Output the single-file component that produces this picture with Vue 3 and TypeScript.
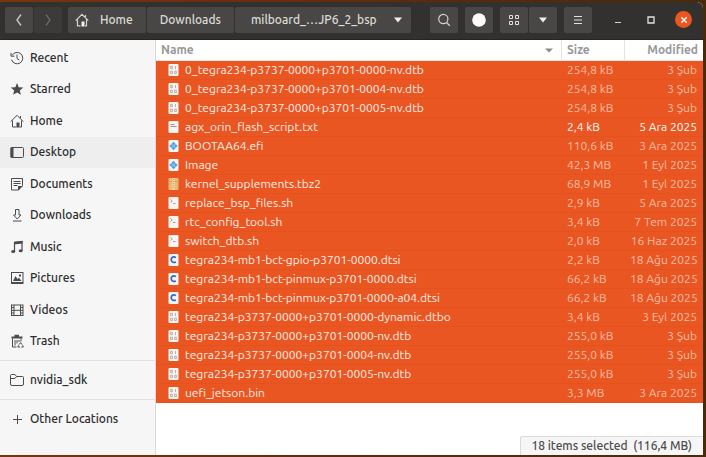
<script setup lang="ts">
import { ref } from 'vue'

type Kind = 'binary' | 'text' | 'exec' | 'archive' | 'script' | 'c'

interface FileRow {
  kind: Kind
  name: string
  size: string
  modified: string
  focused?: boolean
}

interface Place {
  icon: string
  label: string
}

const places: Place[] = [
  { icon: 'recent', label: 'Recent' },
  { icon: 'star', label: 'Starred' },
  { icon: 'home', label: 'Home' },
  { icon: 'desktop', label: 'Desktop' },
  { icon: 'documents', label: 'Documents' },
  { icon: 'downloads', label: 'Downloads' },
  { icon: 'music', label: 'Music' },
  { icon: 'pictures', label: 'Pictures' },
  { icon: 'videos', label: 'Videos' },
  { icon: 'trash', label: 'Trash' },
]
const current = ref('Desktop')

const files: FileRow[] = [
  { kind: 'binary', name: '0_tegra234-p3737-0000+p3701-0000-nv.dtb', size: '254,8 kB', modified: '3 Şub' },
  { kind: 'binary', name: '0_tegra234-p3737-0000+p3701-0004-nv.dtb', size: '254,8 kB', modified: '3 Şub' },
  { kind: 'binary', name: '0_tegra234-p3737-0000+p3701-0005-nv.dtb', size: '254,8 kB', modified: '3 Şub' },
  { kind: 'text', name: 'agx_orin_flash_script.txt', size: '2,4 kB', modified: '5 Ara 2025', focused: true },
  { kind: 'exec', name: 'BOOTAA64.efi', size: '110,6 kB', modified: '3 Ara 2025' },
  { kind: 'exec', name: 'Image', size: '42,3 MB', modified: '1 Eyl 2025' },
  { kind: 'archive', name: 'kernel_supplements.tbz2', size: '68,9 MB', modified: '1 Eyl 2025' },
  { kind: 'script', name: 'replace_bsp_files.sh', size: '2,9 kB', modified: '5 Ara 2025' },
  { kind: 'script', name: 'rtc_config_tool.sh', size: '3,4 kB', modified: '7 Tem 2025' },
  { kind: 'script', name: 'switch_dtb.sh', size: '2,0 kB', modified: '16 Haz 2025' },
  { kind: 'c', name: 'tegra234-mb1-bct-gpio-p3701-0000.dtsi', size: '2,2 kB', modified: '18 Ağu 2025' },
  { kind: 'c', name: 'tegra234-mb1-bct-pinmux-p3701-0000.dtsi', size: '66,2 kB', modified: '18 Ağu 2025' },
  { kind: 'c', name: 'tegra234-mb1-bct-pinmux-p3701-0000-a04.dtsi', size: '66,2 kB', modified: '18 Ağu 2025' },
  { kind: 'binary', name: 'tegra234-p3737-0000+p3701-0000-dynamic.dtbo', size: '3,4 kB', modified: '3 Eyl 2025' },
  { kind: 'binary', name: 'tegra234-p3737-0000+p3701-0000-nv.dtb', size: '255,0 kB', modified: '3 Şub' },
  { kind: 'binary', name: 'tegra234-p3737-0000+p3701-0004-nv.dtb', size: '255,0 kB', modified: '3 Şub' },
  { kind: 'binary', name: 'tegra234-p3737-0000+p3701-0005-nv.dtb', size: '255,0 kB', modified: '3 Şub' },
  { kind: 'binary', name: 'uefi_jetson.bin', size: '3,3 MB', modified: '3 Ara 2025' },
]
</script>

<template>
  <div class="backdrop">
    <div class="window">
      <header class="bar">
        <div class="group history">
          <button class="btn square" aria-label="Back">
            <svg width="14" height="14" viewBox="0 0 14 14"><path d="M9 1.5Q6.800 4.500 5 7Q6.800 9.500 9 12.500" fill="none" stroke="#c9c7c3" stroke-width="1.300" /></svg>
          </button>
          <button class="btn square off" aria-label="Forward" disabled>
            <svg width="14" height="14" viewBox="0 0 14 14"><path d="M5 1.500Q7.200 4.500 9 7Q7.200 9.500 5 12.500" fill="none" stroke="#77746f" stroke-width="1.200" /></svg>
          </button>
        </div>
        <nav class="group path" aria-label="Path">
          <button class="btn crumb first">
            <svg width="14" height="14" viewBox="0 0 14 14">
              <path d="M.7 7.600 7 1.300l6.300 6.300M2.500 6.500v6.300h3M11.500 6.500v6.300h-1.500M10.500 4V2" fill="none" stroke="#d5d3cf" stroke-width="1.200" />
              <path d="M6.500 8.500h3v4.900h-3z" fill="#f2f1ef" />
            </svg>
            Home
          </button>
          <button class="btn crumb">Downloads</button>
          <button class="btn crumb last">
            milboard_…JP6_2_bsp
            <svg width="10" height="6" viewBox="0 0 10 6"><path d="M1 .5h8L5 5.500z" fill="#f0efed" /></svg>
          </button>
        </nav>
        <div class="tools">
          <button class="btn square" aria-label="Search">
            <svg width="14" height="14" viewBox="0 0 14 14"><circle cx="6.300" cy="6" r="4.600" fill="none" stroke="#d5d3cf" stroke-width="1.200" /><path d="m9.500 9.500 3.300 3.200" stroke="#d5d3cf" stroke-width="1.300" /></svg>
          </button>
          <button class="btn square" aria-label="Operations">
            <svg width="14" height="14" viewBox="0 0 14 14"><circle cx="7" cy="7" r="6.800" fill="#fbfbfa" /></svg>
          </button>
          <div class="group">
            <button class="btn square" aria-label="Icon view">
              <svg width="12" height="12" viewBox="0 0 12 12"><path d="M1.500 1.500h3v3h-3zM7.500 1.500h3v3h-3zM1.500 7.500h3v3h-3zM7.500 7.500h3v3h-3z" fill="none" stroke="#e3e1de" /></svg>
            </button>
            <button class="btn square" aria-label="View options">
              <svg width="10" height="6" viewBox="0 0 10 6"><path d="M1 .5h8L5 5.500z" fill="#f0efed" /></svg>
            </button>
          </div>
          <button class="btn square" aria-label="Menu">
            <svg width="10" height="10" viewBox="0 0 10 10"><path d="M1 1.500h8M1 5h8M1 8.500h8" stroke="#e3e1de" stroke-width="1.100" /></svg>
          </button>
        </div>
        <div class="controls">
          <button class="ctl" aria-label="Minimize">
            <svg width="8" height="8" viewBox="0 0 8 8"><path d="M1 6.500h6" stroke="#d5d3cf" stroke-width="1.200" /></svg>
          </button>
          <button class="ctl" aria-label="Maximize">
            <svg width="8" height="8" viewBox="0 0 8 8"><path d="M1 1h6v6H1z" fill="none" stroke="#e3e1de" stroke-width="1.300" /></svg>
          </button>
          <button class="ctl close" aria-label="Close">
            <svg width="8" height="8" viewBox="0 0 8 8"><path d="m1.300 1.300 5.400 5.400M6.700 1.300 1.300 6.700" stroke="#fff" stroke-width="1.400" /></svg>
          </button>
        </div>
      </header>

      <div class="body">
        <nav class="side" aria-label="Places">
          <div class="places">
            <a
              v-for="p in places"
              :key="p.label"
              href="#"
              class="place"
              :class="{ on: p.label === current }"
              @click.prevent="current = p.label"
            >
              <svg width="14" height="14" viewBox="0 0 14 14" fill="none" stroke="#4b4b4b" stroke-width="1">
                <template v-if="p.icon === 'recent'">
                  <path d="M2 4.500A5.700 5.700 0 1 1 1.600 8.700M1 1.800v3.400h3.400M7 3.500V7.500L9.300 9" />
                </template>
                <path v-else-if="p.icon === 'star'" d="m7 1 1.700 4.200 4.600.3-3.500 2.900 1.100 4.400L7 10.400l-3.900 2.400 1.100-4.400L.7 5.500l4.600-.3z" fill="#4b4b4b" stroke="none" />
                <template v-else-if="p.icon === 'home'">
                  <path d="M.7 7.600 7 1.300l6.300 6.300M2.500 6.500v6.500h4M11.500 6.500v6.500h-2M10.500 4V2" />
                  <path d="M6.500 8.500h3v5h-3z" fill="#4b4b4b" stroke="none" />
                </template>
                <template v-else-if="p.icon === 'desktop'">
                  <rect x="1" y="2.500" width="12.500" height="10" rx="1" />
                  <path d="M.5 2.500h3v10h-3z" fill="#4b4b4b" stroke="none" />
                </template>
                <template v-else-if="p.icon === 'documents'">
                  <path d="M1.500 1.500h11v7l-4 4.500h-7zM3.500 4.500h7M3.500 6.500h7M3.500 8.500h4" />
                  <path d="M8 13.500V9h5z" fill="#4b4b4b" stroke="none" />
                </template>
                <template v-else-if="p.icon === 'downloads'">
                  <path d="M5.500 1.500h3.500v5.500h2L7.200 11 3.500 7h2zM3 13h8.500" />
                </template>
                <template v-else-if="p.icon === 'music'">
                  <path d="M4.500 11.500V2.500L12 1.500V10.500" stroke-width="1.200" />
                  <path d="M4 1.700 12.600.9v2.700L4 4.600z" fill="#4b4b4b" stroke="none" />
                  <ellipse cx="3.200" cy="11.500" rx="2" ry="1.500" fill="#4b4b4b" stroke="none" />
                  <ellipse cx="10.700" cy="10.700" rx="2" ry="1.500" fill="#4b4b4b" stroke="none" />
                </template>
                <template v-else-if="p.icon === 'pictures'">
                  <rect x="1.500" y="1.500" width="11.500" height="11" />
                  <path d="M3 10 5.500 5l2 3L9 6.700 11.500 10zM9 3.500h2v2H9zM1.500 11h11.500v1.500H1.500z" fill="#4b4b4b" stroke="none" />
                </template>
                <template v-else-if="p.icon === 'videos'">
                  <rect x="1.500" y="2" width="11.500" height="10.500" />
                  <path d="M4 2v10.500M10.500 2v10.500M4 7.300h6.500M1.500 4.500H4M1.500 7.300H4M1.500 10H4M10.500 4.500H13M10.500 7.300H13M10.500 10H13" />
                </template>
                <template v-else>
                  <path d="M2.500 4.500v8.500h4M5 6v5.500M7 6v3.500M11 4.500V7.500M9 6v2" />
                  <path d="M1.500 2.500h11v2h-11zM4.500.700h4.500v2h-4.500z" fill="#4b4b4b" stroke="none" />
                  <path d="m9 10.700 1.600-2.200 1.600 2.200M12.700 11.300l.6 1.700h-2M10 13H7.900l.6-1.700" />
                </template>
              </svg>
              {{ p.label }}
            </a>
          </div>
          <div class="section">
            <a href="#" class="place">
              <svg width="14" height="14" viewBox="0 0 14 14" fill="none" stroke="#4b4b4b"><path d="M.5 11V2.500Q.5 1.500 1.500 1.500H5L6.500 3.500H12.500Q13.500 3.500 13.500 4.500V11Q13.500 12.500 12 12.500H2Q.5 12.500.5 11zM.5 5.500H5L6.500 3.500" /></svg>
              nvidia_sdk
            </a>
          </div>
          <div class="section end">
            <a href="#" class="place">
              <svg width="14" height="14" viewBox="0 0 14 14" stroke="#4b4b4b"><path d="M7.500 3v9M3 7.500h9" /></svg>
              Other Locations
            </a>
          </div>
        </nav>

        <main class="content">
          <table class="files">
            <colgroup>
              <col />
              <col class="c-size" />
              <col class="c-mod" />
            </colgroup>
            <thead>
              <tr>
                <th aria-sort="ascending">
                  <button class="sort">
                    Name
                    <svg width="8" height="5" viewBox="0 0 8 5"><path d="M0 .5h8L4 4.500z" fill="#8d8b88" /></svg>
                  </button>
                </th>
                <th><button class="sort">Size</button></th>
                <th><button class="sort right">Modified</button></th>
              </tr>
            </thead>
            <tbody>
              <tr v-for="f in files" :key="f.name" :class="{ focused: f.focused }">
                <td>
                  <span class="file">
                    <svg width="11" height="12" viewBox="0 0 11 12">
                      <template v-if="f.kind === 'archive'">
                        <rect x=".5" width="10" height="12" rx="1" fill="#e8b878" />
                        <path d="M.5 3.500h10" stroke="#d9a566" />
                        <path d="M4.500 0h2v12h-2z" fill="#f6dcae" />
                        <path d="M5.500 1v10" stroke="#cfa060" stroke-dasharray="1 1" />
                      </template>
                      <template v-else>
                        <rect x=".5" width="10" height="12" rx="1" fill="#f7f4f1" />
                        <g v-if="f.kind === 'binary'" fill="none" stroke="#a5a19d" stroke-width=".8">
                          <path d="M2.600 2.400h1.800v2.300H2.600zM7.500 2v3.100M2.600 7.200h1.800v2.300H2.600zM6.600 7.200h1.800v2.300H6.600z" />
                        </g>
                        <path v-else-if="f.kind === 'text'" d="M2.500 3.500h4M2.500 5.500h6" stroke="#9b9792" />
                        <g v-else-if="f.kind === 'exec'" fill="#4fa3e3">
                          <path d="M5.500 1.800 7.500 3.800 5.500 5.800 3.500 3.800zM5.500 6.200 7.500 8.200 5.500 10.200 3.500 8.200zM3.300 4 5.300 6 3.300 8 1.300 6zM7.700 4 9.700 6 7.700 8 5.700 6z" />
                          <path d="M5.500 4.500 7 6 5.500 7.500 4 6z" fill="#7dbdec" />
                        </g>
                        <path v-else-if="f.kind === 'script'" d="m2.500 2.500 1.800 1.500-1.800 1.500M5 6.500h2.500" fill="none" stroke="#9b9792" stroke-width=".9" />
                        <path v-else d="M7.900 3.600Q5.900 2.400 4.400 3.300 3.200 4.200 3.200 5.800 3.300 7.600 4.900 8.200 6.400 8.600 7.900 7.900" fill="none" stroke="#2f69cc" stroke-width="1.700" />
                      </template>
                    </svg>
                    {{ f.name }}
                  </span>
                </td>
                <td class="meta">{{ f.size }}</td>
                <td class="meta right">{{ f.modified }}</td>
              </tr>
            </tbody>
          </table>
          <div class="status" role="status">18 items selected&nbsp; (116,4 MB)</div>
        </main>
      </div>
    </div>
  </div>
</template>

<style>
body {
  margin: 0;
}
</style>

<style scoped>
.backdrop {
  box-sizing: border-box;
  height: 100vh;
  min-height: 440px;
  padding: 2px 3px 2px 0;
  background: linear-gradient(90deg, #7a3410, #5c2a0c 60%, #4a2a0a);
  font: 12px/16px Ubuntu, "Noto Sans", sans-serif;
}
.window {
  display: flex;
  flex-direction: column;
  height: 100%;
  overflow: hidden;
  border-radius: 0 6px 0 0;
  background: #fff;
}
button {
  border: 0;
  padding: 0;
  background: none;
  font: inherit;
  color: inherit;
}
svg {
  display: block;
  flex: none;
}
.bar {
  box-sizing: border-box;
  display: flex;
  flex: none;
  align-items: center;
  height: 38px;
  padding: 0 11px 2px 5px;
  border-bottom: 1px solid #262523;
  background: #32312f;
  color: #dddbd7;
  font-weight: 500;
}
.group {
  display: flex;
  gap: 1px;
}
.btn {
  display: flex;
  align-items: center;
  justify-content: center;
  height: 26px;
  border-radius: 2px;
  background: #484745;
}
.square {
  width: 28px;
}
.off {
  background: #3c3b39;
}
.path {
  margin-left: 6px;
}
.crumb {
  padding: 0 13px;
}
.first {
  gap: 11px;
  padding: 0 13px 0 7px;
}
.last {
  gap: 16px;
  padding: 0 8px 0 16px;
}
.tools {
  display: flex;
  gap: 7px;
  margin-left: auto;
}
.controls {
  display: flex;
  gap: 16px;
  margin-left: 17px;
}
.ctl {
  display: flex;
  align-items: center;
  justify-content: center;
  width: 17px;
  height: 17px;
  border-radius: 50%;
}
.close {
  background: #e95622;
}
.body {
  display: flex;
  flex: 1;
  min-height: 0;
}
.side {
  box-sizing: border-box;
  display: flex;
  flex: none;
  flex-direction: column;
  width: 156px;
  padding: 2px 0 18px;
  border-right: 1px solid #dcdad8;
  background: #f6f6f6;
}
.places {
  display: flex;
  flex: 1;
  flex-direction: column;
  padding-bottom: 3px;
}
.place {
  display: flex;
  flex: 1;
  align-items: center;
  gap: 6px;
  padding-left: 10px;
  color: #2c2c2c;
  font-weight: 500;
  text-decoration: none;
}
.on {
  background: #eeeeee;
}
.section {
  display: flex;
  height: 38px;
  border-top: 1px solid #e2e1df;
}
.end {
  height: 37px;
}
.content {
  display: flex;
  flex: 1;
  flex-direction: column;
  min-width: 0;
}
.files {
  width: 100%;
  table-layout: fixed;
  border-collapse: separate;
  border-spacing: 0;
}
.c-size {
  width: 63px;
}
.c-mod {
  width: 79px;
}
th {
  height: 20px;
  padding: 0;
  border-bottom: 1px solid #e6e4e2;
}
th + th {
  border-left: 1px solid #e6e4e2;
}
.sort {
  display: flex;
  align-items: center;
  justify-content: space-between;
  width: 100%;
  padding: 0 8px 0 5px;
  color: #9a9896;
  font-weight: 700;
}
.sort.right {
  justify-content: flex-end;
  padding-right: 5px;
}
td {
  box-sizing: border-box;
  height: 19px;
  padding: 0;
  border-bottom: 1px solid #e4521f;
  background: #e95622;
  color: #ffeee6;
  white-space: nowrap;
}
.file {
  display: flex;
  align-items: center;
  gap: 6px;
  padding-left: 12px;
}
.meta {
  padding-left: 6px;
  color: #fabfa6;
}
.meta.right {
  padding-right: 6px;
  text-align: right;
}
.focused .meta {
  color: #fff;
}
.status {
  align-self: flex-end;
  margin-top: auto;
  padding: 1px 11px 1px 10px;
  border: 1px solid #dcdad8;
  border-width: 1px 0 0 1px;
  border-radius: 3px 0 0 0;
  background: #f6f6f6;
  color: #4b4b4b;
  font-weight: 500;
}
</style>
